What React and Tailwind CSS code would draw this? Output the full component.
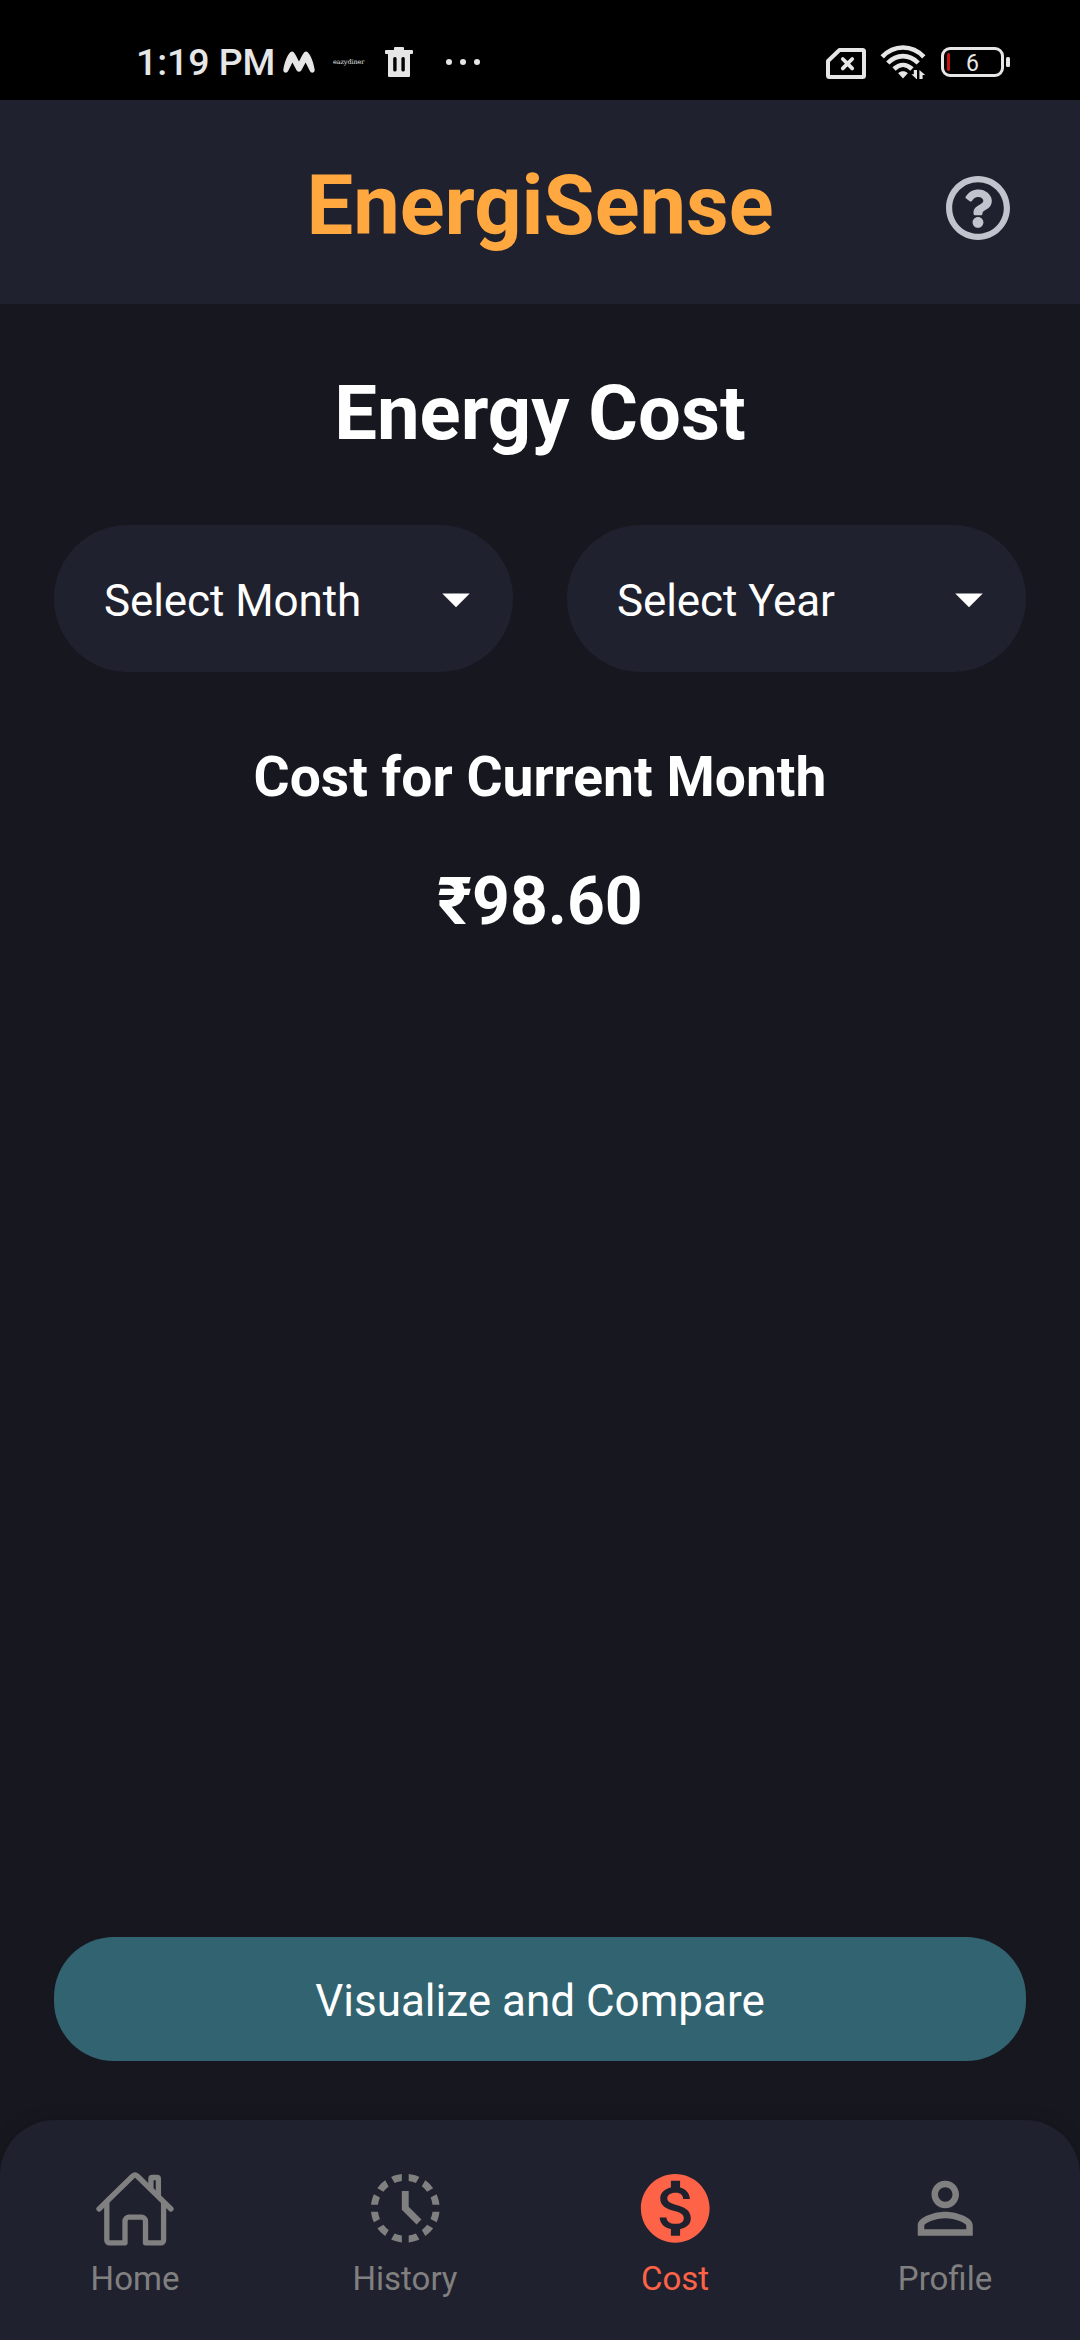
import React from "react";
import { FaRegQuestionCircle } from "react-icons/fa";
import { MdArrowDropDown, MdHistoryToggleOff, MdMonetizationOn } from "react-icons/md";

function StatusBar() {
  return (
    <div className="flex h-[100px] items-center bg-black pt-[24px] pr-[70px] pl-[136px] text-[#e6e6e6]">
      <span className="w-[147px] text-[37.5px] leading-[44px] font-medium tracking-[-0.1px] whitespace-nowrap">1:19 PM</span>
      <svg className="h-[22px] w-[32px]" viewBox="0 0 32 22" fill="currentColor">
        <path d="M.3 19C1 13 4 4 7.500 .9Q9 -.1 10.500 .9C12.500 3 14.500 7.500 16 10.500C17.500 7.500 19.500 3 21.500 .9Q23 -.1 24.500 .9C28 4 31 13 31.700 19Q31.800 21.700 29.400 21.700Q27.500 21.700 26.600 19.500L22.600 11.500L18.300 19.500Q16 22 13.700 19.500L9.400 11.500L5.400 19.500Q4.500 21.700 2.600 21.700Q.2 21.700 .3 19z" />
      </svg>
      <span className="ml-[18px] w-[52px] font-['DejaVu_Serif'] text-[6.5px] leading-[10px] tracking-[-0.1px]">eazydiner</span>
      <svg className="h-[30px] w-[28px]" viewBox="0 0 28 30" fill="currentColor">
        <path fillRule="evenodd" d="M10 0h8a1 1 0 0 1 1 1v2h8a1 1 0 0 1 1 1v2a1 1 0 0 1-1 1h-2v22a1 1 0 0 1-1 1H4a1 1 0 0 1-1-1V7H1a1 1 0 0 1-1-1V4a1 1 0 0 1 1-1h8V1a1 1 0 0 1 1-1zM9.800 10a1.600 1.600 0 0 0-1.600 1.600v11.300a1.700 1.700 0 0 0 3.400 0V11.600A1.600 1.600 0 0 0 9.800 10zM18 10a1.600 1.600 0 0 0-1.600 1.600v11.300a1.700 1.700 0 0 0 3.400 0V11.600A1.600 1.600 0 0 0 18 10z" />
      </svg>
      <div className="ml-[33px] flex gap-2">
        <i className="size-[6px] rounded-full bg-[#e6e6e6]" />
        <i className="size-[6px] rounded-full bg-[#e6e6e6]" />
        <i className="size-[6px] rounded-full bg-[#e6e6e6]" />
      </div>
      <div className="ml-auto flex items-center">
        <svg className="mt-[2px] h-[31px] w-[40px]" viewBox="0 0 40 31" fill="none" stroke="currentColor" strokeLinejoin="round">
          <path d="M13.500 2H36.500a1.500 1.500 0 0 1 1.500 1.500V27.500a1.500 1.500 0 0 1-1.500 1.500H3.500A1.500 1.500 0 0 1 2 27.500V13z" strokeWidth="4" />
          <path d="M16.800 11l9.400 9.400M26.200 11l-9.400 9.400" strokeWidth="3.800" strokeLinecap="round" />
        </svg>
        <svg className="ml-[14px] h-[34px] w-[47px]" viewBox="0 0 47 34" fill="none" stroke="currentColor">
          <path d="M2.200 11.800C14 -.6 32 -.6 43.800 11.800" strokeWidth="4.600" />
          <path d="M7.800 18C16.800 8.800 29.200 8.800 38.200 18" strokeWidth="4.600" />
          <path d="M14 24C19.500 18.600 26.500 18.600 32 24" strokeWidth="4.600" />
          <path d="M23 33.500L18.200 28.300C21 25.700 25 25.700 27.800 28.300z" fill="currentColor" stroke="none" />
          <path d="M37 25v9.500l-5.600-5.200h2.400v-4.300zM39.400 34.500v-9.500l5.800 5h-2.600v4.500z" fill="currentColor" stroke="none" />
        </svg>
        <div className="ml-[14px] flex h-[30px] w-[63px] items-center rounded-[9px] border-[3px] border-[#e6e6e6] pl-[3px]">
          <i className="h-[18px] w-[3px] rounded-full bg-[#c4120f]" />
          <span className="ml-[16px] pt-[3px] text-[23px] leading-[24px]">6</span>
        </div>
        <i className="ml-[2px] h-[10px] w-[4px] rounded-[1.5px] bg-[#e6e6e6]" />
      </div>
    </div>
  );
}

function HomeIcon() {
  return (
    <svg className="size-[82px]" viewBox="0 0 82 82" fill="none" stroke="currentColor" strokeWidth="5.300" strokeLinecap="round" strokeLinejoin="round">
      <path d="M5 41L38.800 8Q41 6 43.200 8L77 41" />
      <path d="M12.800 35V72.200a2.600 2.600 0 0 0 2.600 2.600H31V53.200a4 4 0 0 1 4-4H47.500a4 4 0 0 1 4 4V74.800H67a2.600 2.600 0 0 0 2.600-2.600V35" />
      <path d="M56.900 19V10.900a1.400 1.400 0 0 1 1.400-1.400H63a1.400 1.400 0 0 1 1.400 1.400V27" />
    </svg>
  );
}

function ProfileIcon() {
  return (
    <svg className="size-[82.500px]" viewBox="0 0 24 24" fill="currentColor">
      <path d="M12 5.900c1.160 0 2.100.940 2.100 2.100s-.940 2.100-2.100 2.100S9.900 9.160 9.900 8s.940-2.100 2.100-2.100m0 9c2.970 0 6.100 1.460 6.100 2.100v1.100H5.900V17c0-.640 3.130-2.100 6.100-2.100M12 4C9.790 4 8 5.790 8 8s1.790 4 4 4 4-1.790 4-4-1.790-4-4-4zm0 9c-2.670 0-8 1.340-8 4v3h16v-3c0-2.660-5.330-4-8-4z" />
    </svg>
  );
}

function Select({ label }) {
  return (
    <button className="flex h-[147px] flex-1 items-center justify-between rounded-full bg-[#20212e] pr-[24px] pl-[50px] text-white">
      <span className="pt-[5px] text-[44px] leading-[52px] tracking-[-0.1px]">{label}</span>
      <MdArrowDropDown className="size-[66px]" />
    </button>
  );
}

function Tab({ icon, label, active }) {
  return (
    <div className={active ? "flex flex-1 flex-col items-center text-[#ff6347]" : "flex flex-1 flex-col items-center text-[#808080]"}>
      <div className="flex size-[83px] items-center justify-center">{icon}</div>
      <span className="mt-[9px] text-[33px] leading-[39px]">{label}</span>
    </div>
  );
}

export default function App() {
  return (
    <div className="flex h-[2340px] w-[1080px] flex-col overflow-hidden bg-[#17171f] font-[Roboto,sans-serif]">
      <StatusBar />
      <header className="grid h-[204px] grid-cols-[1fr_auto_1fr] items-start bg-[#20212e] px-[69px] pt-[57px]">
        <h1 className="col-start-2 text-[83px] leading-[98px] font-bold text-[#ffa840]">EnergiSense</h1>
        <FaRegQuestionCircle className="mt-[18px] size-[66px] justify-self-end text-[#c1c4cd]" />
      </header>
      <main className="flex flex-1 flex-col px-[54px] pt-[65px] pb-[59px] text-center text-white">
        <h2 className="text-[76px] leading-[88px] font-bold">Energy Cost</h2>
        <div className="mt-[68px] flex gap-[54px] text-left">
          <Select label="Select Month" />
          <Select label="Select Year" />
        </div>
        <h3 className="mt-[73px] text-[55.200px] leading-[64px] font-bold">Cost for Current Month</h3>
        <p className="mt-[54px] text-[66px] leading-[78px] font-bold">₹98.60</p>
        <button className="mt-auto h-[124px] rounded-[60px] bg-[#326370] pt-[4px] text-[44px] leading-[52px]">Visualize and Compare</button>
      </main>
      <nav className="flex h-[220px] rounded-t-[55px] bg-[#20212e] pt-[47px] shadow-[0_0_18px_rgba(0,0,0,0.14)]">
        <Tab icon={<HomeIcon />} label="Home" />
        <Tab icon={<MdHistoryToggleOff className="size-[82.500px]" />} label="History" />
        <Tab icon={<MdMonetizationOn className="size-[82.500px]" />} label="Cost" active />
        <Tab icon={<ProfileIcon />} label="Profile" />
      </nav>
    </div>
  );
}
